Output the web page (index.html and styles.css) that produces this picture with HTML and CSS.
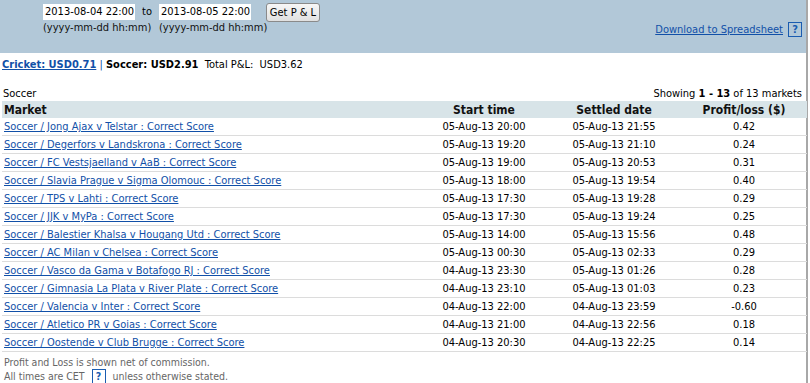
FILE: index.html
```html
<!DOCTYPE html>
<html>
<head>
<meta charset="utf-8">
<link rel="stylesheet" href="styles.css">
</head>
<body>
<div class="page">
  <div class="filter">
    <div class="dates">
      <div class="field">
        <div class="input">2013-08-04 22:00</div>
        <div class="hint">(yyyy-mm-dd hh:mm)</div>
      </div>
      <div class="to">to</div>
      <div class="field">
        <div class="input">2013-08-05 22:00</div>
        <div class="hint">(yyyy-mm-dd hh:mm)</div>
      </div>
      <button class="btn">Get P &amp; L</button>
    </div>
    <div class="download">
      <a href="#">Download to Spreadsheet</a>
      <span class="help">?</span>
    </div>
  </div>
  <div class="totals">
    <a href="#" class="sport-link">Cricket: USD0.71</a> <span class="sep">|</span> <b>Soccer: USD2.91</b>&nbsp; Total P&amp;L:&nbsp; USD3.62
  </div>
  <div class="caption">
    <span>Soccer</span>
    <span>Showing <b>1 - 13</b> of 13 markets</span>
  </div>
  <table class="grid">
    <thead>
      <tr><th class="c-market">Market</th><th class="c-start">Start time</th><th class="c-settled">Settled date</th><th class="c-pl">Profit/loss ($)</th></tr>
    </thead>
    <tbody>
      <tr><td><a href="#">Soccer / Jong Ajax v Telstar : Correct Score</a></td><td>05-Aug-13 20:00</td><td>05-Aug-13 21:55</td><td>0.42</td></tr>
      <tr><td><a href="#">Soccer / Degerfors v Landskrona : Correct Score</a></td><td>05-Aug-13 19:20</td><td>05-Aug-13 21:10</td><td>0.24</td></tr>
      <tr><td><a href="#">Soccer / FC Vestsjaelland v AaB : Correct Score</a></td><td>05-Aug-13 19:00</td><td>05-Aug-13 20:53</td><td>0.31</td></tr>
      <tr><td><a href="#">Soccer / Slavia Prague v Sigma Olomouc : Correct Score</a></td><td>05-Aug-13 18:00</td><td>05-Aug-13 19:54</td><td>0.40</td></tr>
      <tr><td><a href="#">Soccer / TPS v Lahti : Correct Score</a></td><td>05-Aug-13 17:30</td><td>05-Aug-13 19:28</td><td>0.29</td></tr>
      <tr><td><a href="#">Soccer / JJK v MyPa : Correct Score</a></td><td>05-Aug-13 17:30</td><td>05-Aug-13 19:24</td><td>0.25</td></tr>
      <tr><td><a href="#">Soccer / Balestier Khalsa v Hougang Utd : Correct Score</a></td><td>05-Aug-13 14:00</td><td>05-Aug-13 15:56</td><td>0.48</td></tr>
      <tr><td><a href="#">Soccer / AC Milan v Chelsea : Correct Score</a></td><td>05-Aug-13 00:30</td><td>05-Aug-13 02:33</td><td>0.29</td></tr>
      <tr><td><a href="#">Soccer / Vasco da Gama v Botafogo RJ : Correct Score</a></td><td>04-Aug-13 23:30</td><td>05-Aug-13 01:26</td><td>0.28</td></tr>
      <tr><td><a href="#">Soccer / Gimnasia La Plata v River Plate : Correct Score</a></td><td>04-Aug-13 23:10</td><td>05-Aug-13 01:03</td><td>0.23</td></tr>
      <tr><td><a href="#">Soccer / Valencia v Inter : Correct Score</a></td><td>04-Aug-13 22:00</td><td>04-Aug-13 23:59</td><td>-0.60</td></tr>
      <tr><td><a href="#">Soccer / Atletico PR v Goias : Correct Score</a></td><td>04-Aug-13 21:00</td><td>04-Aug-13 22:56</td><td>0.18</td></tr>
      <tr><td><a href="#">Soccer / Oostende v Club Brugge : Correct Score</a></td><td>04-Aug-13 20:30</td><td>04-Aug-13 22:25</td><td>0.14</td></tr>
    </tbody>
  </table>
  <div class="notes">
    <div class="note-line">Profit and Loss is shown net of commission.</div>
    <div class="note-line">All times are CET <span class="help">?</span> unless otherwise stated.</div>
  </div>
</div>
</body>
</html>
```
FILE: styles.css
```css
html, body {
  margin: 0;
  padding: 0;
  background: #fff;
}
body {
  font-family: "DejaVu Sans Condensed", "Liberation Sans", sans-serif;
  font-size: 11px;
  color: #000;
}
.page {
  width: 806px;
  height: 383px;
  border-right: 2px solid #a8a8a8;
  box-sizing: content-box;
}
a { color: #1150a8; }
.filter {
  background: #b2c8d8;
  height: 53px;
  display: flex;
  justify-content: space-between;
  align-items: flex-start;
}
.dates {
  display: flex;
  align-items: flex-start;
  padding-left: 43px;
  padding-top: 4px;
}
.field { display: flex; flex-direction: column; width: 92px; }
.input {
  background: #fff;
  height: 16px;
  line-height: 16px;
  padding-left: 2px;
  white-space: nowrap;
}
.hint { line-height: 15px; color: #111; white-space: nowrap; }
.to { width: 24px; text-align: center; line-height: 16px; }
.btn {
  margin-left: 15px;
  margin-top: -1px;
  width: 54px;
  height: 19px;
  padding: 0;
  font-family: inherit;
  font-size: 11px;
  color: #000;
  background: linear-gradient(#f7f7f7, #e0e0e0);
  border: 1px solid #8a8a8a;
  border-radius: 3px;
}
.download {
  margin-top: 22px;
  margin-right: 4px;
  display: flex;
  align-items: center;
  gap: 5px;
}
.help {
  display: inline-flex;
  width: 12px;
  height: 13px;
  border: 1px solid #1a5cb0;
  color: #1a5cb0;
  font-weight: bold;
  font-size: 11px;
  align-items: center;
  justify-content: center;
  vertical-align: middle;
}
.totals {
  padding: 4px 0 0 2px;
  height: 16px;
  line-height: 16px;
}
.sport-link { font-weight: bold; }
.sep { color: #1150a8; }
.caption {
  margin-top: 14px;
  display: flex;
  justify-content: space-between;
  padding: 0 4px 0 3px;
  line-height: 14px;
}
.grid {
  border-collapse: collapse;
  width: 805px;
  margin-left: 2px;
}
.grid th {
  background: #d8e4e8;
  font-weight: bold;
  font-size: 12px;
  height: 17px;
  padding: 0;
  color: #111;
}
.grid th.c-market { text-align: left; padding-left: 2px; }
.grid td {
  height: 17px;
  padding: 0;
  border-bottom: 1px solid #dcdcdc;
  text-align: center;
}
.grid td:first-child { text-align: left; padding-left: 2px; }
.c-start { width: 126px; }
.c-settled { width: 134px; }
.c-pl { width: 126px; }
.notes {
  color: #666;
  padding: 3px 0 0 4px;
  font-size: 10.5px;
}
.note-line {
  height: 14px;
  line-height: 14px;
  display: flex;
  align-items: center;
  white-space: pre;
}
.notes .help { margin: 0 4px; font-size: 10.5px; }
```
